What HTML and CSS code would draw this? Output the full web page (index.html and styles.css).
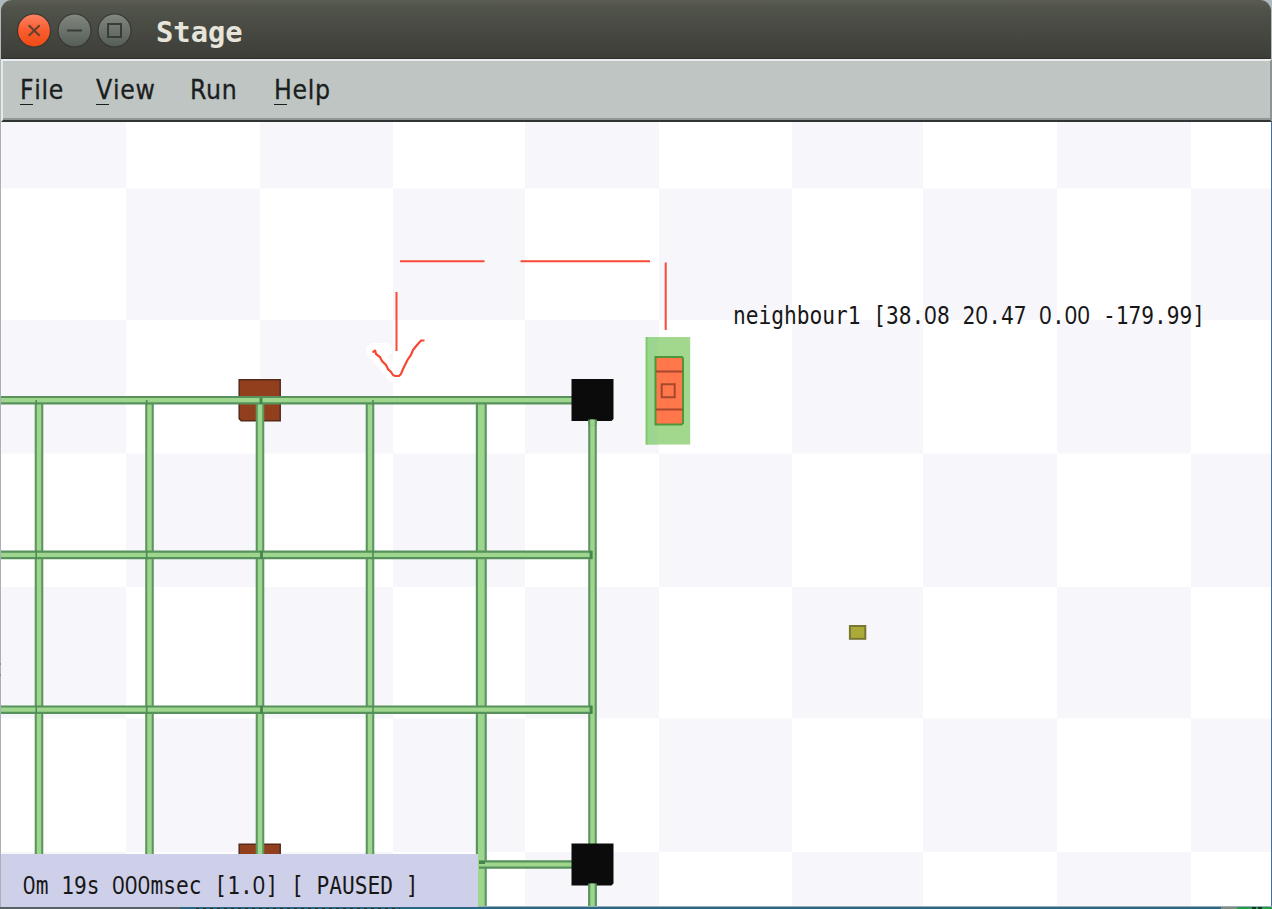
FILE: index.html
```html
<!DOCTYPE html>
<html lang="en">
<head>
<meta charset="utf-8">
<title>Stage</title>
<link rel="stylesheet" href="styles.css">
</head>
<body>
<div class="window">
  <header class="titlebar">
    <svg class="controls" width="132" height="58" viewBox="0 0 132 58">
      <defs>
        <linearGradient id="close" x1="0" y1="0" x2="0" y2="1"><stop offset="0" stop-color="#fb8465"/><stop offset=".5" stop-color="#fa5c2d"/><stop offset="1" stop-color="#ef4a14"/></linearGradient>
        <linearGradient id="ctl" x1="0" y1="0" x2="0" y2="1"><stop offset="0" stop-color="#88897f"/><stop offset=".15" stop-color="#7b8179"/><stop offset="1" stop-color="#555d57"/></linearGradient>
      </defs>
      <g stroke="#363732" stroke-width="1.2">
        <circle cx="33" cy="30.500" r="16.500" fill="url(#close)"/>
        <circle cx="73.500" cy="30.500" r="16.500" fill="url(#ctl)"/>
        <circle cx="113.500" cy="30.500" r="16.500" fill="url(#ctl)"/>
      </g>
      <path d="M27.700 25.200l11 10.500m0-10.500l-11 10.500" stroke="#66402f" stroke-width="2.200" fill="none"/>
      <path d="M66 30.500h15M107 24h13v13h-13z" stroke="#383c37" stroke-width="2" fill="none"/>
    </svg>
    <span class="title">Stage</span>
  </header>
  <nav class="menubar">
    <span class="item file"><span class="key">F</span>ile</span>
    <span class="item view"><span class="key">V</span>iew</span>
    <span class="item run">Run</span>
    <span class="item help"><span class="key">H</span>elp</span>
  </nav>
  <main class="world">
    <svg class="scene" width="1272" height="787" viewBox="0 122 1272 787">
      <rect y="122" width="1272" height="787" fill="#fff"/>
      <path fill="#f7f6fb" d="M0 122h126v66.500H0zM260 122h133v66.500H260zM525 122h134v66.500H525zM792 122h131v66.500H792zM1057 122h134v66.500h-134z
        M126 188.500h134V320H126zM393 188.500h132V320H393zM659 188.500h133V320H659zM923 188.500h134V320H923zM1191 188.500h81V320h-81z
        M0 320h126v133.500H0zM260 320h133v133.500H260zM525 320h134v133.500H525zM792 320h131v133.500H792zM1057 320h134v133.500h-134z
        M126 453.500h134V587H126zM393 453.500h132V587H393zM659 453.500h133V587H659zM923 453.500h134V587H923zM1191 453.500h81V587h-81z
        M0 587h126v131.500H0zM260 587h133v131.500H260zM525 587h134v131.500H525zM792 587h131v131.500H792zM1057 587h134v131.500h-134z
        M126 718.500h134V852H126zM393 718.500h132V852H393zM659 718.500h133V852H659zM923 718.500h134V852H923zM1191 718.500h81V852h-81z
        M0 852h126v57H0zM260 852h133v57H260zM525 852h134v57H525zM792 852h131v57H792zM1057 852h134v57h-134z"/>
      <!-- corner posts -->
      <g fill="#913f1d" stroke="#552a1d" stroke-width="1.500">
        <path d="M239.200 379.700h41v41h-39l-2-2zM239.200 844.200h41v40h-41z"/>
      </g>
      <!-- parking grid: dark casing, light core -->
      <g fill="none">
        <path d="M39 403V909M149.500 403V909M260 403V909M370 403V909" stroke="#5b9661" stroke-width="8.600"/>
        <path d="M39 403V909M149.500 403V909M260 403V909M370 403V909" stroke="#9fd68d" stroke-width="4.400"/>
        <path d="M481.300 403V909" stroke="#5b9661" stroke-width="11"/>
        <path d="M481.300 403V909" stroke="#9fd68d" stroke-width="6.600"/>
        <path d="M592.500 419V909" stroke="#5b9661" stroke-width="8.600"/>
        <path d="M592.500 419V909" stroke="#9fd68d" stroke-width="4.400"/>
        <path d="M0 400.200H575M0 554.900H592.500M0 709.700H592.500M479 864.500H575" stroke="#57915c" stroke-width="8.600"/>
        <path d="M0 400.200H575M0 554.900H591M0 709.700H591M479 864.500H575" stroke="#9fd68d" stroke-width="4.200"/>
        <path d="M36.200 400V405M36.200 550.600v8.600M36.200 705.400v8.600M146.700 400V405M146.700 550.600v8.600M146.700 705.400v8.600M373 400V405M373 550.600v8.600M373 705.400v8.600" stroke="#4f8d58" stroke-width="1.600"/>
        <path d="M261 398v6M261.500 551v8M261.500 705.700v8M591 551v8M591 705.700v8M479 862.500h6" stroke="#438450" stroke-width="2.800"/>
      </g>
      <path fill="#0b0b0b" d="M571.500 379h42v40l-2 2h-40zM571.500 843.500h42v40l-2 2h-40z"/>
      <path d="M592.500 419.500v6M592.500 883.500V909" stroke="#5b9661" stroke-width="8.600"/>
      <path d="M592.500 419.500v6M592.500 883.500V909" stroke="#9fd68d" stroke-width="4.400"/>
      <!-- planned route -->
      <path d="M373 350h12M373 350l20 25 10-17" fill="none" stroke="#fff" stroke-width="14" stroke-linecap="round" stroke-linejoin="round"/>
      <path d="M400 261.300h84.500M520.500 261.300H650M665.700 262.500V330M396.500 292v59" fill="none" stroke="#f84b38" stroke-width="2"/>
      <path d="M372.500 352.500l3-2.500M375 350l1 4 4 3 2 4 4 4 2 4 3 3 2 3 2 1h4l2-2 2-5 2-4 3-6 3-4 2-5 4-5 4-4.500h3.500" fill="none" stroke="#f84735" stroke-width="2.200"/>
      <!-- car -->
      <rect x="645.700" y="337" width="44.500" height="107.500" fill="#a1d88d"/>
      <rect x="647" y="337" width="11" height="107.500" fill="#9bd58f"/>
      <path d="M646.600 337v107.500" stroke="#7bcc62" stroke-width="1.800"/>
      <path d="M655.500 357H682l1 1.500V423l-1.500 1.500h-26z" fill="#ff774b" stroke="#4f963b" stroke-width="2"/>
      <path d="M656 371.500h26.500M656 409.500h26.500M661.700 384.200h13v13h-13z" fill="none" stroke="#a6482c" stroke-width="2"/>
      <rect x="849.900" y="626" width="15.400" height="12.800" fill="#abaa38" stroke="#777735" stroke-width="2"/>
      <!-- window edges and the desktop behind -->
      <path d="M.5 122V907" stroke="#a7b2b8"/>
      <path d="M0 664h1M0 675h1" stroke="#a57a50" stroke-width="1.500"/>
      <path d="M1271.500 122V909" stroke="#3b70a9"/>
      <path d="M0 906.500H1272" stroke="#9ab0bd"/>
      <path d="M0 908H180" stroke="#586266" stroke-width="2"/>
      <path d="M180 908H1221" stroke="#2b6685" stroke-width="2"/>
      <path d="M1221 908h16" stroke="#828a82" stroke-width="2"/>
      <path d="M1237 908h35" stroke="#249b49" stroke-width="2"/>
      <path d="M196 908.500H400" stroke="#302c26" stroke-dasharray="3 4"/>
      <path d="M1252 908h10" stroke="#123a20" stroke-width="2" stroke-dasharray="4 2"/>
    </svg>
    <div class="label mono">neighbour1 [38.<i>0</i>8 2<i>0</i>.47 <i>0</i>.<i>00</i> -179.99]</div>
    <div class="status"><span class="mono"><i>0</i>m 19s <i>000</i>msec [1.<i>0</i>] [ PAUSED ]</span></div>
  </main>
</div>
</body>
</html>
```
FILE: styles.css
```css
body {
  margin: 0;
  background: #aebabd;
  overflow: hidden;
}

.window {
  display: flex;
  flex-direction: column;
  width: 1272px;
  height: 909px;
}

.titlebar {
  display: flex;
  align-items: center;
  box-sizing: border-box;
  height: 59px;
  margin: 0 1px;
  border-bottom: 1px solid #30312d;
  border-radius: 11px 11px 0 0;
  background: linear-gradient(#5b5d52, #50534a 15%, #3c3d37);
}

.controls {
  flex: none;
}

.title {
  margin-left: 23px;
  padding-top: 5px;
  color: #e6e4db;
  font: bold 28.8px/34px "DejaVu Sans Mono", monospace;
}

.menubar {
  display: flex;
  align-items: flex-start;
  box-sizing: border-box;
  height: 63px;
  margin-left: 1px;
  padding: 13px 0 0 17px;
  border: solid;
  border-width: 2px;
  border-color: #e9eded #8b9492 #303433 #e5e9e8;
  background: #bfc5c3;
  box-shadow: inset 0 -2px #909896;
  color: #1b1e21;
  font: 26.3px/32px "DejaVu Sans Condensed", "DejaVu Sans", sans-serif;
  font-stretch: condensed;
  letter-spacing: 0.7px;
  -webkit-text-stroke: 0.3px #1b1e21;
}

.item {
  flex: none;
  white-space: nowrap;
}

.file { width: 76px; }
.view { width: 94px; }
.run { width: 84px; }

.key {
  display: inline-block;
  height: 31px;
  background: linear-gradient(#1b1e21, #1b1e21) 0 100% / 13px 1.500px no-repeat;
}

.world {
  position: relative;
  height: 787px;
}

.scene {
  display: block;
}

.mono {
  color: #171717;
  font: 21.2px/26px "DejaVu Sans Mono", monospace;
  white-space: pre;
  transform: scaleY(1.19);
}

.mono i {
  font-family: "Liberation Sans", sans-serif;
  font-size: 22.1px;
  line-height: 1;
  font-style: normal;
  letter-spacing: 0.47px;
}

.label {
  position: absolute;
  left: 733px;
  top: 181px;
}

.status {
  position: absolute;
  left: 1px;
  top: 732px;
  display: flex;
  align-items: center;
  box-sizing: border-box;
  width: 477px;
  height: 53px;
  padding: 11px 0 0 22px;
  background: #cecfe9;
}
```
